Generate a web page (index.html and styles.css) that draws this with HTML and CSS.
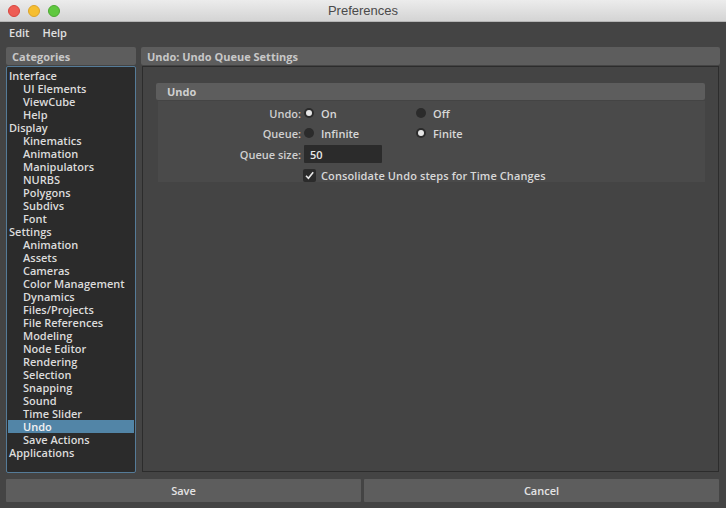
FILE: index.html
```html
<!DOCTYPE html>
<html>
<head>
<meta charset="utf-8">
<link rel="stylesheet" href="styles.css">
</head>
<body>
<div class="window">
  <div class="titlebar">
    <div class="lights">
      <span class="light red"></span>
      <span class="light yellow"></span>
      <span class="light green"></span>
    </div>
    <div class="title">Preferences</div>
  </div>
  <div class="menubar">
    <span class="menu">Edit</span>
    <span class="menu">Help</span>
  </div>
  <div class="main">
    <div class="left">
      <div class="header">Categories</div>
      <ul class="list">
        <li>Interface</li>
        <li class="sub">UI Elements</li>
        <li class="sub">ViewCube</li>
        <li class="sub">Help</li>
        <li>Display</li>
        <li class="sub">Kinematics</li>
        <li class="sub">Animation</li>
        <li class="sub">Manipulators</li>
        <li class="sub">NURBS</li>
        <li class="sub">Polygons</li>
        <li class="sub">Subdivs</li>
        <li class="sub">Font</li>
        <li>Settings</li>
        <li class="sub">Animation</li>
        <li class="sub">Assets</li>
        <li class="sub">Cameras</li>
        <li class="sub">Color Management</li>
        <li class="sub">Dynamics</li>
        <li class="sub">Files/Projects</li>
        <li class="sub">File References</li>
        <li class="sub">Modeling</li>
        <li class="sub">Node Editor</li>
        <li class="sub">Rendering</li>
        <li class="sub">Selection</li>
        <li class="sub">Snapping</li>
        <li class="sub">Sound</li>
        <li class="sub">Time Slider</li>
        <li class="sub selected">Undo</li>
        <li class="sub">Save Actions</li>
        <li>Applications</li>
      </ul>
    </div>
    <div class="right">
      <div class="header">Undo: Undo Queue Settings</div>
      <div class="panel">
        <div class="frame">
          <div class="frame-header">Undo</div>
          <div class="frame-body">
            <div class="row">
              <span class="label">Undo:</span>
              <span class="opt"><span class="radio on"></span>On</span>
              <span class="opt"><span class="radio"></span>Off</span>
            </div>
            <div class="row">
              <span class="label">Queue:</span>
              <span class="opt"><span class="radio"></span>Infinite</span>
              <span class="opt"><span class="radio on"></span>Finite</span>
            </div>
            <div class="row row-size">
              <span class="label">Queue size:</span>
              <span class="field">50</span>
            </div>
            <div class="row">
              <span class="label"></span>
              <span class="check">
                <svg width="13" height="13" viewBox="0 0 13 13"><path d="M3 6.8 L5.4 9.3 L10.2 3.3" fill="none" stroke="#e8e8e8" stroke-width="1.6"/></svg>
              </span>
              <span class="check-label">Consolidate Undo steps for Time Changes</span>
            </div>
          </div>
        </div>
      </div>
    </div>
  </div>
  <div class="buttons">
    <div class="btn">Save</div>
    <div class="btn">Cancel</div>
  </div>
</div>
</body>
</html>
```

FILE: styles.css
```css
* { box-sizing: border-box; }
html, body {
  margin: 0;
  padding: 0;
  background: #444444;
}
body {
  width: 726px;
  height: 508px;
  overflow: hidden;
  font-family: "Open Sans", "DejaVu Sans", sans-serif;
  font-size: 11px;
  font-weight: 600;
  color: #d6d6d6;
}
.window {
  width: 726px;
  height: 508px;
  display: flex;
  flex-direction: column;
  background: #444444;
}
.titlebar {
  height: 22px;
  background: linear-gradient(#ececec, #d4d4d4);
  border-bottom: 1px solid #b5b5b5;
  position: relative;
  display: flex;
  align-items: center;
  justify-content: center;
  flex: none;
}
.lights {
  position: absolute;
  left: 8px;
  top: 5px;
  display: flex;
  gap: 8px;
}
.light {
  width: 12px;
  height: 12px;
  border-radius: 50%;
  display: block;
}
.red { background: #ee5d55; border: 1px solid #d8453e; }
.yellow { background: #f6be2f; border: 1px solid #dca329; }
.green { background: #5fc83f; border: 1px solid #4da832; }
.title {
  font-family: "Liberation Sans", "DejaVu Sans", sans-serif;
  font-weight: 400;
  font-size: 13px;
  color: #4a4a4a;
}
.menubar {
  height: 20px;
  display: flex;
  align-items: center;
  padding-left: 9px;
  gap: 13px;
  flex: none;
  color: #e0e0e0;
}
.main {
  display: flex;
  gap: 5px;
  padding: 5px 6px 0 6px;
  height: 431px;
  flex: none;
}
.left {
  width: 130px;
  display: flex;
  flex-direction: column;
}
.right {
  flex: 1;
  display: flex;
  flex-direction: column;
}
.header {
  height: 18px;
  background: #5d5d5d;
  border-radius: 2px;
  padding-left: 6px;
  display: flex;
  align-items: center;
  color: #c8c8c8;
  font-weight: 700;
  flex: none;
}
.list {
  list-style: none;
  margin: 1px 0 0 0;
  padding: 2px 0 0 0;
  height: 407px;
  background: #2b2b2b;
  border: 1px solid #557b98;
  border-radius: 2px;
}
.list li {
  height: 13px;
  line-height: 13px;
  padding-left: 2px;
  color: #dcdcdc;
  white-space: nowrap;
}
.list li.sub { padding-left: 16px; }
.list li.selected {
  background: #5285a7;
  color: #f2f2f2;
  margin: 0 1px;
  padding-left: 15px;
}
.panel {
  margin: 1px 1px 0 1px;
  height: 406px;
  border: 1px solid #2c2c2c;
  padding: 16px 13px 0 13px;
}
.frame { display: flex; flex-direction: column; }
.frame-header {
  height: 17px;
  background: #5d5d5d;
  border-radius: 2px;
  padding-left: 11px;
  display: flex;
  align-items: center;
  color: #d0d0d0;
  font-weight: 700;
}
.frame-body {
  margin-left: 2px;
  margin-top: 1px;
  height: 81px;
  background: #4a4a4a;
  padding-top: 2px;
}
.row {
  display: flex;
  align-items: center;
  height: 20px;
}
.row-size { height: 22px; }
.label {
  width: 143px;
  text-align: right;
  color: #d0d0d0;
  flex: none;
}
.opt {
  width: 112px;
  margin-left: 3px;
  display: flex;
  align-items: center;
  gap: 7px;
  color: #d8d8d8;
  flex: none;
}
.opt + .opt { margin-left: 0; }
.radio {
  width: 10px;
  height: 10px;
  border-radius: 50%;
  background: #2b2b2b;
  display: block;
  position: relative;
  flex: none;
}
.radio.on::after {
  content: "";
  position: absolute;
  left: 2px;
  top: 2px;
  width: 6px;
  height: 6px;
  border-radius: 50%;
  background: #e6e6e6;
}
.field {
  width: 78px;
  height: 18px;
  margin-left: 3px;
  background: #2b2b2b;
  border-radius: 1px;
  padding-left: 6px;
  display: flex;
  align-items: center;
  color: #e8e8e8;
}
.check {
  width: 13px;
  height: 13px;
  margin-left: 2px;
  background: #2b2b2b;
  border-radius: 2px;
  display: flex;
  flex: none;
}
.check-label {
  margin-left: 5px;
  color: #d8d8d8;
  letter-spacing: 0.1px;
}
.buttons {
  display: flex;
  gap: 3px;
  padding: 6px 7px 0 6px;
}
.btn {
  flex: 1;
  height: 23px;
  background: #5d5d5d;
  border-radius: 1px;
  display: flex;
  align-items: center;
  justify-content: center;
  color: #e4e4e4;
}
```
